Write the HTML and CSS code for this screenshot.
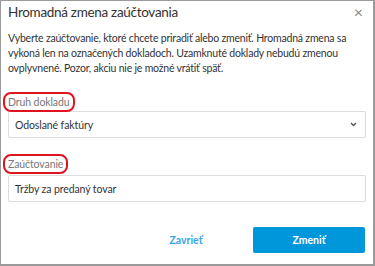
FILE: index.html
```html
<!DOCTYPE html>
<html lang="sk">
<head>
    <meta charset="UTF-8">
    <meta name="viewport" content="width=device-width, initial-scale=1.0">
    <title>Hromadná zmena zaúčtovania</title>
    <link rel="stylesheet" href="styles.css">
</head>
<body>
    <div class="dialog">
        <div class="dialog-header">
            <h1>Hromadná zmena zaúčtovania</h1>
            <span class="close">&times;</span>
        </div>
        <p class="intro">Vyberte zaúčtovanie, ktoré chcete priradiť alebo zmeniť. Hromadná zmena sa vykoná len na označených dokladoch. Uzamknuté doklady nebudú zmenou ovplyvnené. Pozor, akciu nie je možné vrátiť späť.</p>

        <div class="field">
            <label class="marked">Druh dokladu</label>
            <div class="control select">
                <span>Odoslané faktúry</span>
                <svg class="chevron" width="7" height="5" viewBox="0 0 7 5"><path d="M1 1 L3.5 3.5 L6 1" fill="none" stroke="#555" stroke-width="1.4"/></svg>
            </div>
        </div>

        <div class="field second">
            <label class="marked">Zaúčtovanie</label>
            <div class="control">
                <span>Tržby za predaný tovar</span>
            </div>
        </div>

        <div class="dialog-footer">
            <button class="btn btn-link">Zavrieť</button>
            <button class="btn btn-primary">Zmeniť</button>
        </div>
    </div>
</body>
</html>
```

FILE: styles.css
```css
body {
    margin: 0;
    font-family: Lato, "Open Sans", sans-serif;
    color: #333;
    background: #fff;
}
.dialog {
    box-sizing: border-box;
    width: 375px;
    height: 266px;
    border: 1px solid #9a9a9a;
    border-right-width: 2px;
    border-bottom-width: 2px;
    padding: 0 7px;
}
.dialog-header {
    display: flex;
    justify-content: space-between;
    align-items: center;
    padding-top: 0;
}
.dialog-header h1 {
    margin: 0;
    font-size: 13.5px;
    font-weight: normal;
    letter-spacing: -0.3px;
    line-height: 22px;
    color: #333;
}
.close {
    font-size: 16px;
    color: #888;
    line-height: 22px;
    margin-right: 3px;
}
.intro {
    margin: 8px 0 0;
    font-size: 10.5px;
    letter-spacing: -0.2px;
    line-height: 15px;
    color: #333;
}
.field {
    margin-top: 14px;
}
.field.second {
    margin-top: 14px;
}
.marked {
    display: inline-block;
    margin-left: -5px;
    padding: 0 3px 0 3px;
    border: 2px solid #e0141e;
    border-radius: 8px;
    font-size: 10.5px;
    letter-spacing: -0.1px;
    line-height: 16px;
    color: #777;
}
.control {
    display: flex;
    justify-content: space-between;
    align-items: center;
    box-sizing: border-box;
    height: 27px;
    margin-top: -1px;
    padding: 0 8px 0 6px;
    border: 1px solid #ddd;
    border-radius: 2px;
    font-size: 10.5px;
    letter-spacing: -0.1px;
    color: #333;
}
.second .control {
    margin-top: 1px;
}
.dialog-footer {
    display: flex;
    justify-content: flex-end;
    gap: 11px;
    margin-top: 25px;
    margin-right: 1px;
}
.btn {
    width: 112px;
    height: 26px;
    border: none;
    border-radius: 2px;
    font-family: inherit;
    font-size: 10.5px;
    font-weight: bold;
    cursor: pointer;
}
.btn-link {
    background: none;
    color: #3ba3e3;
}
.btn-primary {
    background: #0096da;
    color: #fff;
}
```
